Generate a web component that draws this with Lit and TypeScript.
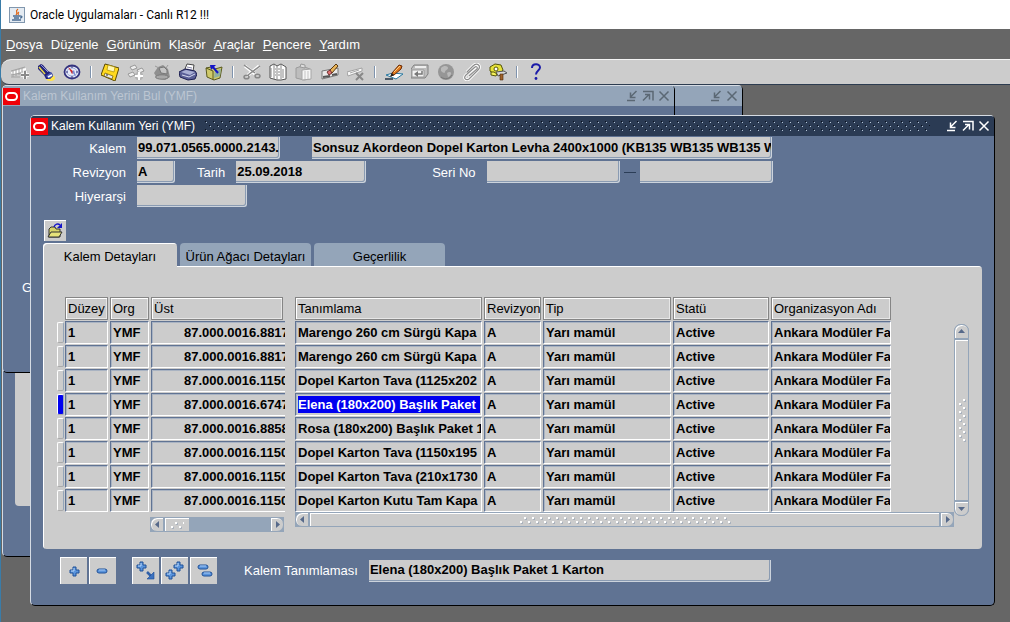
import { LitElement, html, svg, css, nothing, TemplateResult } from "lit";
import { customElement, property } from "lit/decorators.js";

const glyphs: Record<string, TemplateResult> = {
  newRecord: svg`<path d="M0 9l15-4v2L1 12z" fill="#fff"/><path d="M0 8l14-4M0 12l10-2M2 8v6M5 7v6M8 6v6M11 5v4M0 14h9" stroke="#a2a2a2" fill="none"/><path d="M14 8v8M10 12h8" stroke="#fff" stroke-width="3.500"/><path d="M14 8v8M10 12h8" stroke="#8a8a8a" stroke-width="2"/>`,
  find: svg`<ellipse cx="13.500" cy="15" rx="4.500" ry="3" fill="#ffe44a"/><path d="M1 3l3-2 2 1 5 6 4 2 1 3-3 3-4 0-2-4-6-6z" fill="#23237c"/><path d="M2 4l6 7" stroke="#e8d84a" stroke-width="1.500"/><path d="M4 2l7 7" stroke="#8e96d8"/><path d="M9 13l5-4 2 4-4 3z" fill="#4c5cb8"/><path d="M11 14l4-2" stroke="#fff" stroke-width="1.500"/>`,
  navigator: svg`<ellipse cx="9" cy="9" rx="7.500" ry="6.500" fill="#e8ecf8" stroke="#33337f" stroke-width="1.800"/><ellipse cx="9" cy="9" rx="5" ry="4" fill="none" stroke="#9aa8d8"/><path d="M5 4l6 5-2 2z" fill="#d02a2a"/><path d="M13 14l-4-5 2-2z" fill="#7a8ad0"/><path d="M9 3v2M9 13v2M3 9h2M13 9h2" stroke="#33337f"/>`,
  save: svg`<path d="M4 1l14 4-4 13L0 12z" fill="#ffd91f" stroke="#5c4a00"/><path d="M7 2l7 2-1 5-7-2z" fill="#fff6b0" stroke="#a88a00" stroke-width=".7"/><path d="M4 10l8 3-1 3-8-3z" fill="#e6e6e6" stroke="#6b5800" stroke-width=".7"/><path d="M6 11v2" stroke="#333"/>`,
  nextStep: svg`<path d="M3 4l5-2 2 3-5 2zM1 11l5-2 2 3-5 2zM10 7l5-2 2 3-5 2z" fill="#eee" stroke="#999"/><path d="M12 9v8M8 13h8" stroke="#999" stroke-width="4.500"/><path d="M12 9v8M8 13h8" stroke="#fff" stroke-width="2.500"/>`,
  switchResp: svg`<path d="M1 10l3 5 8 2 5-3-2-8-5-4-5 2z" fill="#8f8f8f"/><path d="M6 5l5-1 3 3v4l-6-1z" fill="#c4c4c4" stroke="#777"/><ellipse cx="9" cy="14" rx="6.500" ry="2.200" fill="#a8a8a8" stroke="#7a7a7a"/><path d="M2 3l4 2M15 2l-2 3" stroke="#999"/>`,
  print: svg`<path d="M6 6l2-5 7 1-1 6z" fill="#fff" stroke="#444"/><path d="M8 4l5 1M8 6l5 1" stroke="#88a"/><path d="M0 9l6-3 10 2 2 3-2 5-7 1-8-3z" fill="#5a5f96" stroke="#1d1f50"/><path d="M2 9l5-2 9 2-5 3z" fill="#aab0d4"/><path d="M3 12l7 2 6-3" stroke="#d8dcf0" fill="none"/>`,
  closeForm: svg`<path d="M1 5l5-1 4 2 7-2-2 11-6 2-7-3z" fill="#cfc96a" stroke="#5a5a20"/><path d="M1 5l7 3v9" fill="none" stroke="#5a5a20"/><path d="M10 8l6-2-1 7-6 2z" fill="#8fb0a0"/><path d="M7 3l6 7" stroke="#1414c8" stroke-width="2"/><path d="M5 2h6L6 7z" fill="#1414c8"/>`,
  cut: svg`<path d="M2 3l10 8M16 3L4 13" stroke="#fff" stroke-width="3"/><path d="M1 2l11 8M17 3L5 12" stroke="#8a8a8a" stroke-width="1.500"/><ellipse cx="3.500" cy="14" rx="2.500" ry="1.800" fill="none" stroke="#888" stroke-width="1.500"/><ellipse cx="14.500" cy="13" rx="2.500" ry="1.800" fill="none" stroke="#888" stroke-width="1.500"/>`,
  copy: svg`<path d="M1 3l4-2 3 2 4-2 5 3v12l-5 1-4 0-7-2z" fill="#fff" stroke="#555"/><path d="M5 2v14M8 3v14M12 2v14M2 5v9M14 6v9M6 6h1M6 9h1M6 12h1M9 6h2M9 9h2M9 12h2" stroke="#888"/>`,
  paste: svg`<path d="M1 5l6-2 8 3v10l-6 1-8-2z" fill="#bdbdbd" stroke="#9c9c9c"/><path d="M5 4l1-3 4 1v3z" fill="#ddd" stroke="#999"/><path d="M7 7l9-1v10l-9 1z" fill="#f6f6f6" stroke="#a6a6a6"/><path d="M10 8v8M13 8v8" stroke="#c4c4c4"/>`,
  clear: svg`<path d="M1 8l16-3v7L1 16z" fill="#e9e9e9" stroke="#777"/><path d="M2 14l7-1M11 12l5-1" stroke="#555" stroke-width="2"/><path d="M8 8l7-7 2 2-6 7z" fill="#e8b45a" stroke="#5a3a10"/><path d="M6 9l3-2 2 3-3 2z" fill="#e07070" stroke="#703030"/>`,
  remove: svg`<path d="M0 9l15-4v3L1 13z" fill="#f8f8f8" stroke="#a2a2a2"/><path d="M3 10l9-3" stroke="#aaa"/><path d="M9 10l7 7M16 10l-7 7" stroke="#888" stroke-width="2"/>`,
  edit: svg`<path d="M1 12l7-2 10 1-7 5z" fill="#fff" stroke="#2878a0"/><path d="M0 16h8" stroke="#234" stroke-width="1.500"/><path d="M7 10l7-8 3 1-1 3-7 6-3 1z" fill="#e07a20" stroke="#6a2c08"/><path d="M5 14l2-4 2 2z" fill="#222"/><path d="M9 9l6-6" stroke="#ffd080"/>`,
  zoom: svg`<path d="M0 6l3-4 14 0v9l-3 4H0z" fill="#bdbdbd" stroke="#808080"/><path d="M1 7h12v7H1z" fill="#f2f2f2" stroke="#999"/><path d="M11 8v3H6" stroke="#777" fill="none" stroke-width="1.500"/><path d="M7 8v6l-4-3z" fill="#777"/><path d="M4 4h11" stroke="#fff" stroke-width="1.500"/>`,
  translate: svg`<circle cx="9" cy="9" r="8" fill="#969696"/><path d="M4 5c3-3 7-2 7 0s-3 2-3 4-3 0-4-1zM10 10c2-2 5-1 4 1s-2 3-3 3z" fill="#b9b9b9"/><path d="M4 14c4 3 9 2 11-2" stroke="#777" fill="none"/>`,
  attach: svg`<path d="M6 14l8-8c1-2-1-3-2-2l-9 8c-3 3 0 6 3 4l9-9c4-4-1-8-5-4l-6 6" fill="none" stroke="#fff" stroke-width="3"/><path d="M6 13l8-7c1-2-1-3-2-2l-9 8c-3 3 0 6 3 4l9-9c4-4-1-8-5-4l-6 6" fill="none" stroke="#8c8c8c" stroke-width="1.200"/>`,
  tools: svg`<path d="M1 4l5-3 6 1 2 5-3 4-6 0-4-3z" fill="#e6e23a" stroke="#55550a"/><circle cx="7" cy="6" r="2" fill="#fff" stroke="#55550a"/><path d="M7 9l8-1 3 2-9 3z" fill="#d8d8d8" stroke="#555"/><path d="M11 11h3v6h-3z" fill="#a0622a" stroke="#4a2a0a" stroke-width=".6"/><path d="M2 9l3 0 3 2-1 2-5-1z" fill="#f4f05a" stroke="#55550a"/>`,
  help: svg`<path d="M5 5c0-5 8-5 8-.500 0 3-4 3-4 7" fill="none" stroke="#1a1aa8" stroke-width="2"/><circle cx="9" cy="15.500" r="1.400" fill="#1a1aa8"/>`,
  folder: svg`<path d="M3 7l2-2h4l1 2h4v8H3z" fill="#d8d468" stroke="#333"/><path d="M2 15l3-5h11l-3 5z" fill="#e6e27a" stroke="#333"/><path d="M8 5c1-3 4-4 6-2" fill="none" stroke="#1414c8" stroke-width="1.500"/><path d="M16 1v5h-5z" fill="#1414c8"/>`,
};

const plus = (x: number, y: number) =>
  svg`<path d="M${x - 1} ${y - 5}h3v3h3v3h-3v3h-3v-3h-3v-3h3z" fill="#5a94dc" stroke="#1f5098"/><path d="M${x} ${y - 4}v3M${x - 3} ${y - 1}h3" stroke="#b8d6f8"/>`;
const minus = (x: number, y: number) =>
  svg`<rect x="${x - 5}" y="${y - 2}" width="10" height="4" rx="2" fill="#5a94dc" stroke="#1f5098"/><path d="M${x - 3} ${y - 1}h6" stroke="#a8caf4"/>`;
const treeGlyphs: Record<string, unknown> = {
  expand: plus(14, 15),
  collapse: minus(13, 14),
  expandBranch: svg`${plus(9, 10)}<path d="M15 15l4 4" stroke="#2f5fa8" stroke-width="2.500"/><path d="M22 15v7h-7z" fill="#3c72c0" stroke="#1c4c94" stroke-width=".6"/>`,
  expandAll: svg`${plus(17, 10)}${plus(9, 18)}`,
  collapseAll: svg`${minus(13, 10)}${minus(17, 17)}`,
};

const icon = (name: string) =>
  html`<svg width="18" height="18" viewBox="0 0 18 18" aria-hidden="true">${glyphs[name]}</svg>`;

const toolbar: [string, string][][] = [
  [["newRecord", "Yeni"], ["find", "Bul"], ["navigator", "Gezgin"]],
  [["save", "Kaydet"], ["nextStep", "Sonraki Adım"], ["switchResp", "Sorumluluk Değiştir"], ["print", "Yazdır"], ["closeForm", "Formu Kapat"]],
  [["cut", "Kes"], ["copy", "Kopyala"], ["paste", "Yapıştır"], ["clear", "Kaydı Temizle"], ["remove", "Sil"]],
  [["edit", "Alanı Düzenle"], ["zoom", "Yakınlaştır"], ["translate", "Çeviriler"], ["attach", "Ekler"], ["tools", "Klasör Araçları"]],
  [["help", "Yardım"]],
];

const menus = [
  ["", "D", "osya"], ["Dü", "z", "enle"], ["", "G", "örünüm"], ["K", "l", "asör"],
  ["", "A", "raçlar"], ["", "P", "encere"], ["", "Y", "ardım"],
];

const columns = ["Düzey", "Org", "Üst", "Tanımlama", "Revizyon", "Tip", "Statü", "Organizasyon Adı"];
const items: [string, string][] = [
  ["8817", "Marengo 260 cm Sürgü Kapa"],
  ["8817", "Marengo 260 cm Sürgü Kapa"],
  ["1150", "Dopel Karton Tava (1125x202"],
  ["6747", "Elena (180x200) Başlık Paket"],
  ["8858", "Rosa (180x200) Başlık Paket 1"],
  ["1150", "Dopel Karton Tava (1150x195"],
  ["1150", "Dopel Karton Tava (210x1730"],
  ["1150", "Dopel Karton Kutu Tam Kapa"],
];
const currentRow = 3;

@customElement("window-title")
export class WindowTitle extends LitElement {
  @property() label = "";
  @property({ type: Boolean, reflect: true }) active = false;
  @property({ type: Boolean }) restorable = false;

  static styles = css`
    :host {
      display: flex;
      align-items: center;
      height: 20px;
      box-sizing: border-box;
      padding-right: 2px;
      color: #bcc6d2;
      background: #94a5b9;
      border-radius: 3px 3px 0 0;
      font: 12px "Liberation Sans", Arial, sans-serif;
      --mark: #5b6874;
    }
    :host([active]) { color: #fff; background: #2b3b54; --mark: #fff; }
    .logo { flex: none; margin-right: 3px; }
    .text { white-space: nowrap; }
    .grip { flex: 1; height: 12px; margin: 0 14px 0 10px; }
    .mark {
      width: 16px;
      height: 16px;
      padding: 0;
      border: 0;
      background: none;
      display: grid;
      place-items: center;
    }
    .mark path { fill: none; stroke: var(--mark); stroke-width: 1.5; }
  `;

  private mark(label: string, d: string) {
    return html`<button class="mark" aria-label=${label}>
      <svg width="12" height="12" viewBox="0 0 12 12"><path d=${d} /></svg>
    </button>`;
  }

  render() {
    return html`
      <svg class="logo" width="17" height="17" viewBox="0 0 17 17" aria-hidden="true">
        <rect width="17" height="17" fill="#f00008" />
        <rect x="3" y="5" width="11" height="7" rx="3.5" fill="none" stroke="#fff" stroke-width="2" />
      </svg>
      <span class="text">${this.label}</span>
      <svg class="grip" aria-hidden="true">
        ${this.active
          ? svg`<defs><pattern id="dots" width="8" height="8" patternUnits="userSpaceOnUse">
              <path d="M0 1h1v1h-1zM4 5h1v1h-1z" fill="#0b1220"/><path d="M1 2h1v1h-1zM5 6h1v1h-1z" fill="#b4c4d6"/>
            </pattern></defs><rect width="100%" height="100%" fill="url(#dots)"/>`
          : nothing}
      </svg>
      ${this.mark("Simge durumuna küçült", "M10.500 1L5 6.500M4.500 2.500v5h5M1 10.500h8")}
      ${this.restorable ? this.mark("Ekranı kapla", "M1 10.500l6-6M3 4.500h4.500v5M1 1.500h10v9") : nothing}
      ${this.mark("Kapat", "M1.500 1.500l9 9M10.500 1.500l-9 9")}
    `;
  }
}

@customElement("scroll-bar")
export class ScrollBar extends LitElement {
  @property({ type: Boolean, reflect: true }) vertical = false;
  @property({ type: Boolean, reflect: true }) short = false;

  static styles = css`
    :host { display: flex; height: 15px; box-sizing: border-box; background: #94a5b9; }
    :host([vertical]) { flex-direction: column; width: 15px; height: auto; border-radius: 7px; }
    .step {
      flex: none;
      width: 14px;
      height: 15px;
      padding: 0;
      box-sizing: border-box;
      border: 1px solid #94a5b9;
      background: #ccc;
      box-shadow: inset 1px 1px #fff;
      display: grid;
      place-items: center;
    }
    .back { border-radius: 7px 0 0 7px; }
    .forward { border-radius: 0 7px 7px 0; }
    :host([vertical]) .step { width: 15px; }
    :host([vertical]) .back { border-radius: 7px 7px 0 0; }
    :host([vertical]) .forward { border-radius: 0 0 7px 7px; }
    .step path { fill: #56698a; }
    .thumb {
      flex: 1;
      box-sizing: border-box;
      border: 1px solid #94a5b9;
      background: #ccc;
      box-shadow: inset 1px 1px #fff;
      display: grid;
      place-items: center;
    }
    :host([short]) .thumb { flex: none; width: 26px; }
    .rail { flex: 1; }
  `;

  render() {
    const [w, h] = this.short ? [14, 8] : this.vertical ? [8, 44] : [212, 8];
    const arrows = this.vertical ? ["M0 5h7L3.500 1z", "M0 2h7L3.500 6z"] : ["M5 0v7L1 3.500z", "M2 0v7l4-3.500z"];
    const step = (side: string, label: string, d: string) => html`
      <button class="step ${side}" aria-label=${label}><svg width="7" height="7"><path d=${d} /></svg></button>`;
    return html`
      ${step("back", "Geri kaydır", arrows[0])}
      <div class="thumb">
        <svg width=${w} height=${h} aria-hidden="true">
          <defs><pattern id="grip" width="8" height="8" patternUnits="userSpaceOnUse">
            <path d="M1 5h2v2h-2zM5 1h2v2h-2z" fill="#fff" /><path d="M3 6h1v2h-2v-1h1zM7 2h1v2h-2v-1h1z" fill="#aab2bd" />
          </pattern></defs>
          <rect width="100%" height="100%" fill="url(#grip)" />
        </svg>
      </div>
      ${this.short ? html`<div class="rail"></div>` : nothing}
      ${step("forward", "İleri kaydır", arrows[1])}
    `;
  }
}

@customElement("app-root")
export class AppRoot extends LitElement {
  static styles = css`
    :host {
      display: flex;
      flex-direction: column;
      min-height: 100vh;
      box-sizing: border-box;
      border-left: 1px solid #3a7ca8;
      background: #666;
      color: #000;
      font: 13px "Liberation Sans", Arial, sans-serif;
    }
    button, input { font: inherit; color: inherit; }
    .caption {
      display: flex;
      align-items: center;
      gap: 5px;
      height: 29px;
      padding-left: 8px;
      box-sizing: border-box;
      background: #fff;
      font: 12px Roboto, "Open Sans", sans-serif;
    }
    .menubar { display: flex; align-items: center; gap: 8px; height: 30px; padding-left: 5px; color: #fff; }
    .menu { padding: 0; border: 0; background: none; }
    .toolbar {
      display: flex;
      align-items: center;
      height: 26px;
      box-sizing: border-box;
      padding-left: 6px;
      background: #ccc;
      border-top: 1px solid #f4f4f4;
      border-bottom: 1px solid #2d3c50;
      border-radius: 10px 0 0 8px;
    }
    .tool { width: 26px; height: 24px; padding: 0; border: 0; background: none; display: grid; place-items: center; }
    .divider { width: 2px; height: 12px; margin: 0 5px; box-sizing: border-box; border-left: 1px solid #7f93ad; border-right: 1px solid #fff; }
    .desktop { flex: 1; position: relative; overflow: hidden; min-height: 536px; }
    .window {
      position: absolute;
      box-sizing: border-box;
      background: #607393;
      border: 1px solid #000;
      border-top-color: #d5dbe3;
      border-left-color: #d5dbe3;
      border-radius: 5px;
    }
    .back { left: 1px; top: 0; width: 741px; height: 472px; }
    .middle { left: 1px; top: 0; width: 673px; height: 288px; }
    .front { left: 29px; right: 15px; top: 30px; padding-bottom: 21px; }
    .sheet { width: 60px; height: 134px; margin: 266px 0 0 12px; background: #ccc; border-radius: 0 0 4px 4px; }
    .peek { margin: 174px 0 0 19px; color: #fff; }

    .form { display: grid; gap: 2px; padding: 1px 12px 0 0; }
    .line { display: flex; align-items: center; height: 22px; color: #fff; white-space: nowrap; }
    .lead { width: 95px; margin-right: 11px; text-align: right; }
    .label { margin-right: 11px; }
    .field {
      height: 22px;
      min-width: 0;
      box-sizing: border-box;
      padding: 0 0 1px 1px;
      border: 0;
      border-right: 1px solid #ccd3dc;
      border-bottom: 1px solid #ccd3dc;
      border-radius: 0 0 3px 0;
      box-shadow: inset -1px -1px #8a9bb2;
      background: #ccc;
      color: #000;
      font-weight: bold;
    }
    .code { width: 143px; margin-right: 32px; }
    .name { width: 460px; }
    .revision { width: 38px; margin-right: 22px; }
    .date { width: 130px; margin-right: 66px; }
    .serial { width: 133px; }
    .dash { width: 12px; height: 1px; margin: 0 4px; background: #2b3d57; }
    .level { width: 110px; }

    .folder {
      display: grid;
      place-items: center;
      width: 22px;
      height: 21px;
      margin: 13px 0 2px 13px;
      padding: 0;
      border: 0;
      background: #ccc;
      box-shadow: inset 1px 1px #fff;
    }
    .tabs { display: flex; gap: 3px; margin-left: 12px; }
    .tab {
      height: 23px;
      box-sizing: border-box;
      width: 131px;
      padding: 3px 0 0;
      border: 0;
      border-radius: 4px 4px 0 0;
      background: #94a5b9;
      white-space: nowrap;
    }
    .tab.chosen { width: 134px; height: 24px; margin-bottom: -1px; background: #ccc; box-shadow: inset 1px 1px #fff; z-index: 1; }
    .panel {
      display: grid;
      grid-template-columns: 1fr 61px 15px;
      margin: 0 12px;
      padding: 30px 13px 17px 14px;
      background: #ccc;
      box-shadow: inset 1px 1px #fff;
      border-radius: 0 4px 4px 4px;
    }
    .side { grid-column: 3; grid-row: 1 / 3; margin: 28px 0 16px; }
    .across { grid-column: 1 / 3; grid-row: 2; display: flex; align-items: flex-start; padding-left: 93px; }
    .short { width: 134px; margin: 5px 11px 0 0; }
    .long { flex: 1; }

    .grid { width: 100%; table-layout: fixed; border-collapse: collapse; }
    .c-mark { width: 8px; }
    .c-0 { width: 45px; }
    .c-1 { width: 41px; }
    .c-2 { width: 144px; }
    .c-4 { width: 59px; }
    .c-5 { width: 130px; }
    .c-6 { width: 98px; }
    .c-7 { width: 122px; }
    .grid th, .grid td { height: 24px; padding: 0 2px 0 0; }
    .grid .wide { padding-right: 10px; }
    .head {
      height: 23px;
      box-sizing: border-box;
      padding: 3px 0 0 2px;
      border: 1px solid #858585;
      box-shadow: inset 1px 1px #fff, inset -1px -1px #e6e6e6;
      font-weight: normal;
      text-align: left;
      white-space: nowrap;
    }
    .wide .head { margin-right: 2px; }
    .cell {
      display: block;
      width: 100%;
      height: 23px;
      box-sizing: border-box;
      padding: 0 0 0 2px;
      border: 1px solid #fff;
      border-top-color: #607393;
      border-left-color: #607393;
      border-radius: 0;
      background: #ccc;
      box-shadow: inset 1px 1px #a9b3c2;
      font-weight: bold;
    }
    .wide .cell { padding-left: 32px; border-right: 0; }
    .picked { padding: 2px 1px 2px 2px; background: linear-gradient(#0000f0, #0000f0) content-box, #ccc; color: #fff; }
    .marker {
      display: block;
      width: 7px;
      height: 21px;
      padding: 0;
      border: 1px solid #fff;
      border-right-color: #94a5b9;
      border-bottom-color: #aaa;
      border-radius: 2px;
      background: #ccc;
    }
    .marker.current { background: #0000f0; }

    .footer { display: flex; align-items: center; margin-top: 8px; padding-left: 29px; color: #fff; }
    .tree { width: 27px; height: 27px; margin-right: 2px; padding: 0; border: 0; background: #ccc; box-shadow: inset 1px 1px #fff; }
    .tree svg { display: block; }
    .tree.apart { margin-left: 14px; }
    .footlabel { margin: 0 11px 0 25px; white-space: nowrap; }
    .summary { width: 402px; }
  `;

  private tree(name: string, label: string, extra = "") {
    return html`<button class="tree ${extra}" aria-label=${label}>
      <svg width="27" height="27" viewBox="0 0 27 27">${treeGlyphs[name]}</svg>
    </button>`;
  }

  private row([code, name]: [string, string], index: number) {
    const picked = index === currentRow;
    const values = ["1", "YMF", `87.000.0016.${code}`, name, "A", "Yarı mamül", "Active", "Ankara Modüler Fab"];
    return html`<tr>
      <td><button class="marker ${picked ? "current" : ""}" aria-label="Kayıt ${index + 1}"></button></td>
      ${values.map((value, c) => html`<td class=${c === 2 ? "wide" : ""}>
        <input class="cell ${picked && c === 3 ? "picked" : ""}" aria-label=${columns[c]} .value=${value} />
      </td>`)}
    </tr>`;
  }

  render() {
    return html`
      <header class="caption">
        <svg width="16" height="16" viewBox="0 0 16 16" aria-hidden="true">
          <rect x=".5" y=".5" width="15" height="15" fill="#e4ebf2" stroke="#8197ae" />
          <path d="M9 2c-4 3 1 3-2 6M10 5c-2 1 0 2-1 3" fill="none" stroke="#e06a1c" stroke-width="1.3" />
          <path d="M4 9h7M5 11h5M11 9c3 0 2 2 0 2M3 13h9" fill="none" stroke="#4a6c92" stroke-width="1.3" />
        </svg>
        <span>Oracle Uygulamaları - Canlı R12 !!!</span>
      </header>
      <nav class="menubar">
        ${menus.map(([a, key, b]) => html`<button class="menu">${a}<u>${key}</u>${b}</button>`)}
      </nav>
      <div class="toolbar" role="toolbar" aria-label="Araç çubuğu">
        ${toolbar.map((group, g) => html`
          ${g ? html`<span class="divider"></span>` : nothing}
          ${group.map(([name, label]) => html`<button class="tool" aria-label=${label}>${icon(name)}</button>`)}`)}
      </div>
      <main class="desktop">
        <section class="window back">
          <window-title></window-title>
          <div class="sheet"></div>
        </section>
        <section class="window middle">
          <window-title label="Kalem Kullanım Yerini Bul (YMF)" restorable></window-title>
          <div class="peek">G</div>
        </section>
        <section class="window front">
          <window-title label="Kalem Kullanım Yeri (YMF)" active restorable></window-title>
          <div class="form">
            <div class="line">
              <label class="lead" for="code">Kalem</label>
              <input class="field code" id="code" .value=${"99.071.0565.0000.2143."} />
              <input class="field name" aria-label="Kalem açıklaması" .value=${"Sonsuz Akordeon Dopel Karton Levha 2400x1000 (KB135 WB135 WB135 WB135"} />
            </div>
            <div class="line">
              <label class="lead" for="revision">Revizyon</label>
              <input class="field revision" id="revision" .value=${"A"} />
              <label class="label" for="date">Tarih</label>
              <input class="field date" id="date" .value=${"25.09.2018"} />
              <label class="label" for="serial">Seri No</label>
              <input class="field serial" id="serial" />
              <span class="dash"></span>
              <input class="field serial" aria-label="Seri No bitiş" />
            </div>
            <div class="line">
              <label class="lead" for="level">Hiyerarşi</label>
              <input class="field level" id="level" />
            </div>
          </div>
          <button class="folder" aria-label="Klasör aç">${icon("folder")}</button>
          <div class="tabs" role="tablist">
            <button class="tab chosen" role="tab" aria-selected="true">Kalem Detayları</button>
            <button class="tab" role="tab" aria-selected="false">Ürün Ağacı Detayları</button>
            <button class="tab" role="tab" aria-selected="false">Geçerlilik</button>
          </div>
          <div class="panel">
            <table class="grid">
              <colgroup>
                <col class="c-mark" />
                ${columns.map((_, c) => html`<col class="c-${c}" />`)}
              </colgroup>
              <thead>
                <tr>
                  <td></td>
                  ${columns.map((name, c) => html`<th class=${c === 2 ? "wide" : ""} scope="col"><div class="head">${name}</div></th>`)}
                </tr>
              </thead>
              <tbody>${items.map((item, i) => this.row(item, i))}</tbody>
            </table>
            <scroll-bar class="side" vertical></scroll-bar>
            <div class="across">
              <scroll-bar class="short" short></scroll-bar>
              <scroll-bar class="long"></scroll-bar>
            </div>
          </div>
          <div class="footer">
            ${this.tree("expand", "Genişlet")}
            ${this.tree("collapse", "Daralt")}
            ${this.tree("expandBranch", "Dalı genişlet", "apart")}
            ${this.tree("expandAll", "Tümünü genişlet")}
            ${this.tree("collapseAll", "Tümünü daralt")}
            <label class="footlabel" for="summary">Kalem Tanımlaması</label>
            <input class="field summary" id="summary" .value=${"Elena (180x200) Başlık Paket 1 Karton"} />
          </div>
        </section>
      </main>
    `;
  }
}
